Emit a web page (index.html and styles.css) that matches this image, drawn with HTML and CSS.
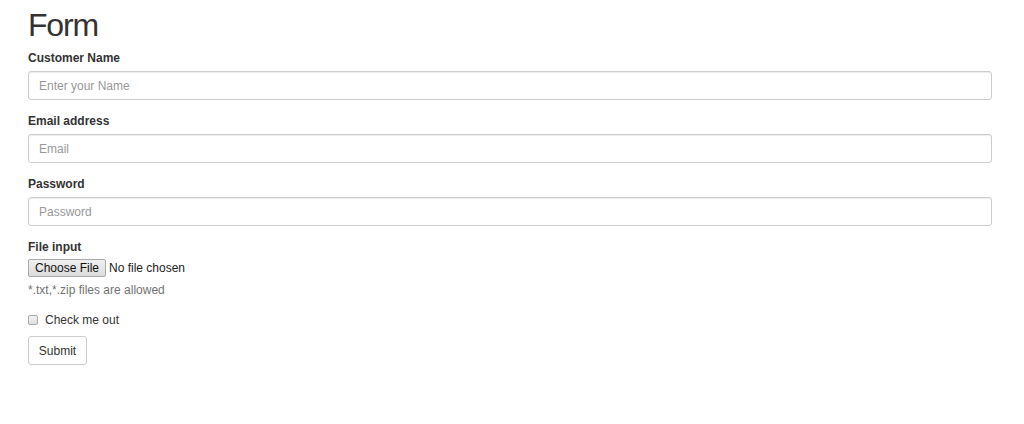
FILE: index.html
```html
<!DOCTYPE html>
<html>
<head>
<meta charset="utf-8">
<link rel="stylesheet" href="styles.css">
</head>
<body>
<div class="container">
  <h1 class="title">Form</h1>
  <form class="form">
    <div class="group">
      <label class="label">Customer Name</label>
      <input class="control" type="text" placeholder="Enter your Name">
    </div>
    <div class="group">
      <label class="label">Email address</label>
      <input class="control" type="email" placeholder="Email">
    </div>
    <div class="group">
      <label class="label">Password</label>
      <input class="control" type="password" placeholder="Password">
    </div>
    <div class="group file-group">
      <label class="label">File input</label>
      <div class="file-row"><span class="file-btn">Choose File</span><span class="file-text">No file chosen</span></div>
      <p class="help">*.txt,*.zip files are allowed</p>
    </div>
    <div class="check">
      <span class="box"></span><span class="check-text">Check me out</span>
    </div>
    <button class="submit" type="button">Submit</button>
  </form>
</div>
</body>
</html>
```

FILE: styles.css
```css
html, body {
  margin: 0;
  padding: 0;
  background: #fff;
}
body {
  font-family: "Liberation Sans", Arial, sans-serif;
  font-size: 12px;
  color: #333;
}
.container {
  width: 964px;
  padding: 0 32px 0 28px;
}
.title {
  margin: 5px 0 0 0;
  font-size: 32px;
  letter-spacing: -1.2px;
  font-weight: 400;
  line-height: 40px;
  color: #333;
}
.form {
  display: flex;
  flex-direction: column;
}
.group {
  display: flex;
  flex-direction: column;
  margin-bottom: 7px;
}
.label {
  font-weight: 700;
  font-size: 12px;
  line-height: 17px;
  margin: 5px 0 4px 0;
  color: #333;
}
.control {
  box-sizing: border-box;
  height: 29px;
  width: 100%;
  margin: 0;
  padding: 4px 10px;
  font-family: "Liberation Sans", Arial, sans-serif;
  font-size: 12px;
  color: #555;
  border: 1px solid #ccc;
  border-radius: 3px;
  box-shadow: inset 0 1px 1px rgba(0,0,0,0.075);
  background: #fff;
}
.control::placeholder {
  color: #999;
}
.group + .group .label {
  margin-top: 6px;
}
.file-group {
  margin-bottom: 0;
}
.file-group .label {
  margin-top: 7px;
  margin-bottom: 3px;
}
.file-row {
  display: flex;
  align-items: center;
  height: 18px;
}
.file-btn {
  box-sizing: border-box;
  height: 18px;
  width: 78px;
  display: flex;
  align-items: center;
  justify-content: center;
  font-size: 12px;
  color: #111;
  background: linear-gradient(#f0f0f0, #dcdcdc);
  border: 1px solid #a9a9a9;
  border-radius: 2px;
}
.file-text {
  margin-left: 3px;
  font-size: 12px;
  color: #222;
}
.help {
  margin: 5px 0 0 0;
  line-height: 17px;
  color: #737373;
}
.check {
  display: flex;
  align-items: center;
  margin-top: 12px;
  height: 17px;
}
.box {
  box-sizing: border-box;
  width: 10px;
  height: 10px;
  border: 1px solid #aaa;
  border-radius: 2px;
  background: linear-gradient(#f4f4f4, #dedede);
  margin-right: 7px;
}
.check-text {
  font-size: 12px;
  color: #333;
}
.submit {
  box-sizing: border-box;
  margin-top: 8px;
  width: 59px;
  height: 29px;
  padding: 0;
  font-family: "Liberation Sans", Arial, sans-serif;
  font-size: 12px;
  color: #333;
  background: #fff;
  border: 1px solid #ccc;
  border-radius: 3px;
}
```
